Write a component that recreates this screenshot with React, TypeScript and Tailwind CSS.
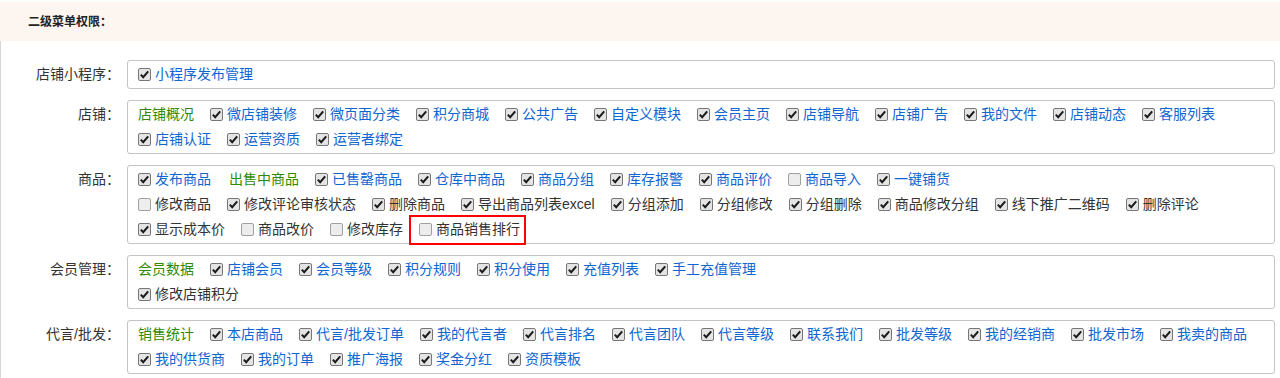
import React from 'react';

type Tone = 'blue' | 'green' | 'dark';

interface Perm {
  text: string;
  tone: Tone;
  checked?: boolean;
  plain?: boolean; // no checkbox
  marked?: boolean; // red outline
}

const b = (text: string, checked = true): Perm => ({ text, tone: 'blue', checked });
const d = (text: string, checked = true): Perm => ({ text, tone: 'dark', checked });
const g = (text: string): Perm => ({ text, tone: 'green', plain: true });

const GROUPS: { label: string; lines: Perm[][] }[] = [
  { label: '店铺小程序：', lines: [[b('小程序发布管理')]] },
  {
    label: '店铺：',
    lines: [
      [
        g('店铺概况'),
        b('微店铺装修'),
        b('微页面分类'),
        b('积分商城'),
        b('公共广告'),
        b('自定义模块'),
        b('会员主页'),
        b('店铺导航'),
        b('店铺广告'),
        b('我的文件'),
        b('店铺动态'),
        b('客服列表'),
      ],
      [b('店铺认证'), b('运营资质'), b('运营者绑定')],
    ],
  },
  {
    label: '商品：',
    lines: [
      [
        b('发布商品'),
        g('出售中商品'),
        b('已售罄商品'),
        b('仓库中商品'),
        b('商品分组'),
        b('库存报警'),
        b('商品评价'),
        b('商品导入', false),
        b('一键铺货'),
      ],
      [
        d('修改商品', false),
        d('修改评论审核状态'),
        d('删除商品'),
        d('导出商品列表excel'),
        d('分组添加'),
        d('分组修改'),
        d('分组删除'),
        d('商品修改分组'),
        d('线下推广二维码'),
        d('删除评论'),
      ],
      [
        d('显示成本价'),
        d('商品改价', false),
        d('修改库存', false),
        { ...d('商品销售排行', false), marked: true },
      ],
    ],
  },
  {
    label: '会员管理：',
    lines: [
      [
        g('会员数据'),
        b('店铺会员'),
        b('会员等级'),
        b('积分规则'),
        b('积分使用'),
        b('充值列表'),
        b('手工充值管理'),
      ],
      [d('修改店铺积分')],
    ],
  },
  {
    label: '代言/批发：',
    lines: [
      [
        g('销售统计'),
        b('本店商品'),
        b('代言/批发订单'),
        b('我的代言者'),
        b('代言排名'),
        b('代言团队'),
        b('代言等级'),
        b('联系我们'),
        b('批发等级'),
        b('我的经销商'),
        b('批发市场'),
        b('我卖的商品'),
      ],
      [b('我的供货商'), b('我的订单'), b('推广海报'), b('奖金分红'), b('资质模板')],
    ],
  },
];

const TONE_CLASS: Record<Tone, string> = {
  blue: 'text-[#0f66d0]',
  green: 'text-[#2f8a00]',
  dark: 'text-[#333]',
};

function Box({ checked }: { checked: boolean }) {
  return (
    <span
      className={`mr-[4px] flex h-[13px] w-[13px] shrink-0 items-center justify-center rounded-[2px] border ${
        checked ? 'border-[#777] bg-[#e4e4e4]' : 'border-[#a0a0a0] bg-[#ededed]'
      }`}
    >
      {checked && (
        <svg width="11" height="11" viewBox="0 0 11 11">
          <path d="M1.8 5.6 L4.2 8.2 L9.2 2.4" fill="none" stroke="#1a1a1a" strokeWidth="2" />
        </svg>
      )}
    </span>
  );
}

function Item({ perm }: { perm: Perm }) {
  const inner = (
    <>
      {!perm.plain && <Box checked={!!perm.checked} />}
      <span className={`whitespace-nowrap ${TONE_CLASS[perm.tone]}`}>{perm.text}</span>
    </>
  );
  if (perm.marked) {
    // highlighted item: red outline drawn round the checkbox and its text
    return (
      <span className="-ml-[10px] flex h-[30px] items-center border-2 border-[#f00] pl-[8px] pr-[4px]">
        {inner}
      </span>
    );
  }
  return (
    <span className={`mr-[16px] flex items-center ${perm.plain ? 'ml-[2px] first:ml-0' : ''}`}>
      {inner}
    </span>
  );
}

export default function App() {
  return (
    <div className="h-[378px] w-[1280px] overflow-hidden bg-white font-['Liberation_Sans','Noto_Sans_CJK_SC',sans-serif] text-[14px] text-[#333]">
      <div className="mt-[2px] flex h-[39px] items-center bg-[#fdf5f0] pl-[28px] text-[12px] font-bold text-[#222]">
        二级菜单权限：
      </div>
      <div className="flex flex-col gap-[11px] border-l border-[#d6d6d6] pb-[10px] pr-[5px] pt-[19px]">
        {GROUPS.map((group) => (
          <div key={group.label} className="flex">
            <div className="mr-[7px] w-[119px] shrink-0 pt-[2px] text-right leading-[25px] text-[#333]">
              {group.label}
            </div>
            <div className="flex-1 rounded-[3px] border border-[#c4c4c4] py-[1px] pl-[10px]">
              {group.lines.map((line, i) => (
                <div key={i} className="flex h-[25px] items-center">
                  {line.map((perm) => (
                    <Item key={perm.text} perm={perm} />
                  ))}
                </div>
              ))}
            </div>
          </div>
        ))}
      </div>
    </div>
  );
}
